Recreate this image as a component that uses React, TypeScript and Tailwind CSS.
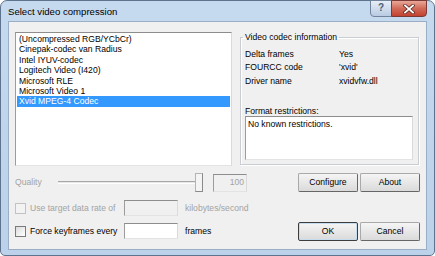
import React from 'react';

const codecs = [
  '(Uncompressed RGB/YCbCr)',
  'Cinepak-codec van Radius',
  'Intel IYUV-codec',
  'Logitech Video (I420)',
  'Microsoft RLE',
  'Microsoft Video 1',
  'Xvid MPEG-4 Codec',
];

const info = [
  { label: 'Delta frames', value: 'Yes' },
  { label: 'FOURCC code', value: "'xvid'" },
  { label: 'Driver name', value: 'xvidvfw.dll' },
];

// sunken edit / list border, win7 classic-ish
const sunken =
  'border border-t-[#8d8d8d] border-l-[#9c9c9c] border-r-[#dadada] border-b-[#e3e3e3]';

function Button({ label, isDefault = false }: { label: string; isDefault?: boolean }) {
  return (
    <button
      className={
        isDefault
          ? 'w-[60px] h-[19px] flex items-center justify-center rounded-[2px] border border-[#3d3d3d] bg-gradient-to-b from-[#f5f5f5] to-[#dadada] shadow-[inset_0_0_0_1px_#c6dcef] text-black'
          : 'w-[60px] h-[19px] flex items-center justify-center rounded-[2px] border border-[#a9a9a9] border-r-[#666666] border-b-[#666666] bg-gradient-to-b from-[#f5f5f5] to-[#dadada] text-black'
      }
    >
      {label}
    </button>
  );
}

function Checkbox({ disabled = false }: { disabled?: boolean }) {
  return (
    <span
      className={
        disabled
          ? 'w-[11px] h-[11px] shrink-0 border border-[#c2c2c2] bg-[#f3f3f3]'
          : 'w-[11px] h-[11px] shrink-0 border border-[#7a7a7a] bg-gradient-to-br from-[#dcdcdc] to-white'
      }
    />
  );
}

export default function App() {
  return (
    <div className="w-[435px] h-[256px] bg-white font-['Liberation_Sans',Arial,sans-serif] text-[8.6px] leading-[10.4px] text-black">
      <div className="h-full flex flex-col rounded-t-[7px] rounded-b-[5px] border border-[#5e738e] bg-gradient-to-b from-[#c6daef] via-[#c0d5ec] to-[#bcd2ea] px-[7px] pb-[5px]">
        {/* title bar */}
        <div className="h-[20px] flex items-start justify-between">
          <span className="mt-[5px] text-[9.6px] leading-[11px]">Select video compression</span>
          <div className="flex -mt-[1px]">
            <div className="w-[22px] h-[17px] flex items-center justify-center rounded-bl-[4px] border border-[#71849c] bg-gradient-to-b from-[#e6eef8] to-[#b9cbe2] text-[10px] font-bold text-[#4b5d75]">
              ?
            </div>
            <div className="w-[36px] h-[17px] -ml-[1px] flex items-center justify-center rounded-br-[4px] border border-[#7a3b36] bg-gradient-to-b from-[#e9a899] via-[#d06a58] to-[#c2412f]">
              <svg width="12" height="10" viewBox="0 0 12 10">
                <path d="M2 1.5 L10 8.5 M10 1.5 L2 8.5" stroke="#5a2a24" strokeWidth="3.4" strokeLinecap="square" />
                <path d="M2 1.5 L10 8.5 M10 1.5 L2 8.5" stroke="#ffffff" strokeWidth="1.8" strokeLinecap="square" />
              </svg>
            </div>
          </div>
        </div>

        {/* client area */}
        <div className="flex-1 border border-[#9aaec6] bg-[#f0f0f0] pt-[10px] pl-[6px]">
          <div className="flex items-start gap-[8px]">
            {/* codec list */}
            <div className={`w-[217px] h-[134px] bg-white pt-[1px] px-[1px] ${sunken}`}>
              {codecs.map((c, i) =>
                i === codecs.length - 1 ? (
                  <div key={c} className="h-[10.4px] pl-[2px] bg-[#3399ff] text-white whitespace-nowrap">
                    {c}
                  </div>
                ) : (
                  <div key={c} className="h-[10.4px] pl-[2px] whitespace-nowrap">
                    {c}
                  </div>
                )
              )}
            </div>

            {/* group box */}
            <fieldset className="w-[179px] h-[133px] border border-[#c9ccd0] shadow-[inset_1px_1px_0_#ffffff,1px_1px_0_#ffffff] px-[2px] pb-[4px]">
              <legend className="px-[2px]">Video codec information</legend>
              <div className="px-[2px]">
                <div className="mt-[5px]">
                  {info.map((r) => (
                    <div key={r.label} className="h-[13.5px] flex items-center">
                      <span className="w-[94px]">{r.label}</span>
                      <span>{r.value}</span>
                    </div>
                  ))}
                </div>
                <div className="mt-[18px]">Format restrictions:</div>
                <div className={`w-[168px] h-[44px] bg-white pt-[2px] pl-[2px] ${sunken}`}>
                  No known restrictions.
                </div>
              </div>
            </fieldset>
          </div>

          {/* bottom controls */}
          <div className="mt-[7px] flex">
            <div className="w-[283px] flex flex-col">
              <div className="h-[19px] flex items-center text-[#a3a3a3]">
                <span className="w-[43px]">Quality</span>
                <div className="w-[145px] flex items-center">
                  <div className="flex-1 h-[3px] border-t border-t-[#a8a8a8] border-b border-b-white bg-[#e6e6e6]" />
                  <div className="w-[8px] h-[19px] -ml-[2px] border border-[#b4b4b4] border-r-[#8a8a8a] border-b-[#8a8a8a] bg-[#f4f4f4]" />
                </div>
                <div className={`ml-[10px] w-[34px] h-[18px] flex items-center justify-end pr-[2px] bg-[#f0f0f0] ${sunken}`}>
                  100
                </div>
              </div>

              <div className="mt-[8px] h-[16px] flex items-center text-[#a3a3a3]">
                <Checkbox disabled />
                <span className="ml-[4px] w-[94px]">Use target data rate of</span>
                <div className={`w-[54px] h-[16px] bg-[#f0f0f0] ${sunken}`} />
                <span className="ml-[7px]">kilobytes/second</span>
              </div>

              <div className="mt-[7px] h-[16px] flex items-center">
                <Checkbox />
                <span className="ml-[4px] w-[94px]">Force keyframes every</span>
                <div className={`w-[54px] h-[16px] bg-white ${sunken}`} />
                <span className="ml-[7px]">frames</span>
              </div>
            </div>

            <div className="flex flex-col">
              <div className="flex gap-[2px]">
                <Button label="Configure" />
                <Button label="About" />
              </div>
              <div className="mt-[30px] flex gap-[2px]">
                <Button label="OK" isDefault />
                <Button label="Cancel" />
              </div>
            </div>
          </div>
        </div>
      </div>
    </div>
  );
}
